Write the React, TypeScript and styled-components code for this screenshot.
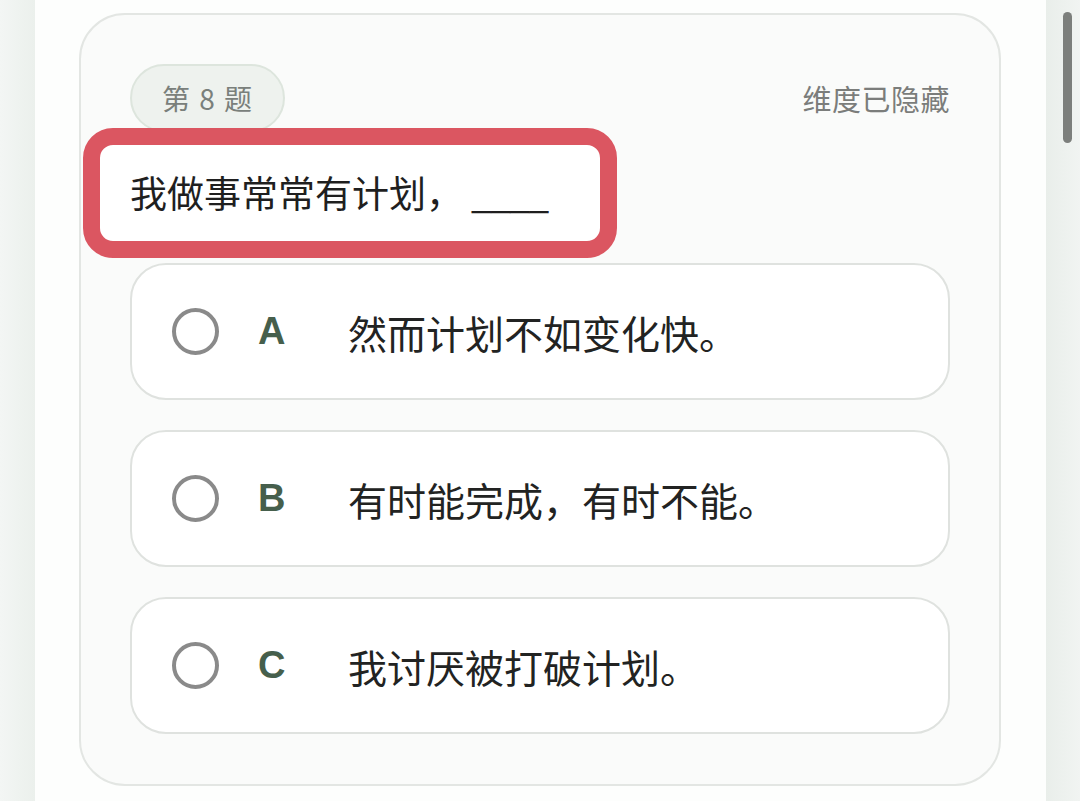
import React from 'react';
import styled, { createGlobalStyle } from 'styled-components';

const GlobalStyle = createGlobalStyle`
  html, body {
    margin: 0;
    padding: 0;
    height: 801px;
    overflow: hidden;
    background: #eef2ef;
    font-family: "Noto Sans CJK SC", "Noto Sans", sans-serif;
  }
`;

type Option = { key: string; text: string };

const options: Option[] = [
  { key: 'A', text: '然而计划不如变化快。' },
  { key: 'B', text: '有时能完成，有时不能。' },
  { key: 'C', text: '我讨厌被打破计划。' },
];

const Screen = styled.div`
  display: flex;
  height: 801px;
  width: 1080px;
`;

const Gutter = styled.div<{ $side: 'left' | 'right' }>`
  width: ${(p) => (p.$side === 'left' ? '35px' : '34px')};
  flex-shrink: 0;
  background: ${(p) =>
    p.$side === 'left'
      ? 'linear-gradient(90deg, #f3f6f4 0%, #ebf0ec 100%)'
      : 'linear-gradient(90deg, #e9eeea 0%, #f1f4f2 100%)'};
  position: relative;
`;

const ScrollThumb = styled.div`
  position: absolute;
  top: 12px;
  left: 17px;
  width: 9px;
  height: 131px;
  border-radius: 5px;
  background: #7c7f7c;
`;

const Panel = styled.main`
  flex: 1;
  background: #fdfefd;
  padding: 13px 44px 0 44px;
  box-sizing: border-box;
`;

const Card = styled.section`
  box-sizing: border-box;
  width: 922px;
  height: 773px;
  padding: 49px 49px 0 49px;
  border: 2px solid #e3e6e3;
  border-radius: 46px;
  background: #fafbfa;
  display: flex;
  flex-direction: column;
`;

const HeaderRow = styled.div`
  display: flex;
  align-items: center;
  justify-content: space-between;
  height: 68px;
`;

const Badge = styled.span`
  box-sizing: border-box;
  height: 68px;
  padding: 0 29px 0 30px;
  display: inline-flex;
  align-items: center;
  border-radius: 34px;
  background: #eef2ee;
  border: 2px solid #dde5dd;
  color: #7a807b;
  font-size: 28px;
  letter-spacing: 1.5px;
`;

const DimensionNote = styled.span`
  color: #7b7d7b;
  font-size: 29px;
  letter-spacing: 0.5px;
`;

const QuestionBox = styled.div`
  align-self: flex-start;
  box-sizing: border-box;
  height: 130px;
  margin: -4px 0 5px -47px;
  padding: 0 52px 2px 30px;
  display: flex;
  align-items: center;
  border: 17px solid #db5661;
  border-radius: 30px;
  background: #ffffff;
  color: #1f1f1f;
  font-size: 37px;
`;

const Blank = styled.span`
  margin-left: 8px;
  letter-spacing: -1.5px;
`;

const OptionList = styled.div`
  display: flex;
  flex-direction: column;
  gap: 30px;
`;

const OptionRow = styled.div`
  box-sizing: border-box;
  height: 137px;
  padding: 0 0 0 40px;
  display: flex;
  align-items: center;
  border: 2px solid #dfe2df;
  border-radius: 36px;
  background: #ffffff;
`;

const Radio = styled.span`
  box-sizing: border-box;
  width: 47px;
  height: 47px;
  border-radius: 50%;
  border: 4px solid #8a8a8a;
  flex-shrink: 0;
`;

const Letter = styled.span`
  width: 90px;
  margin-left: 39px;
  font-family: "Liberation Sans", Arial, sans-serif;
  font-weight: 700;
  font-size: 38px;
  color: #465f4c;
  flex-shrink: 0;
`;

const OptionText = styled.span`
  font-size: 39px;
  color: #222322;
`;

export default function App() {
  return (
    <>
      <GlobalStyle />
      <Screen>
        <Gutter $side="left" />
        <Panel>
          <Card>
            <HeaderRow>
              <Badge>第 8 题</Badge>
              <DimensionNote>维度已隐藏</DimensionNote>
            </HeaderRow>
            <QuestionBox>
              我做事常常有计划，<Blank>____</Blank>
            </QuestionBox>
            <OptionList>
              {options.map((o) => (
                <OptionRow key={o.key}>
                  <Radio />
                  <Letter>{o.key}</Letter>
                  <OptionText>{o.text}</OptionText>
                </OptionRow>
              ))}
            </OptionList>
          </Card>
        </Panel>
        <Gutter $side="right">
          <ScrollThumb />
        </Gutter>
      </Screen>
    </>
  );
}
